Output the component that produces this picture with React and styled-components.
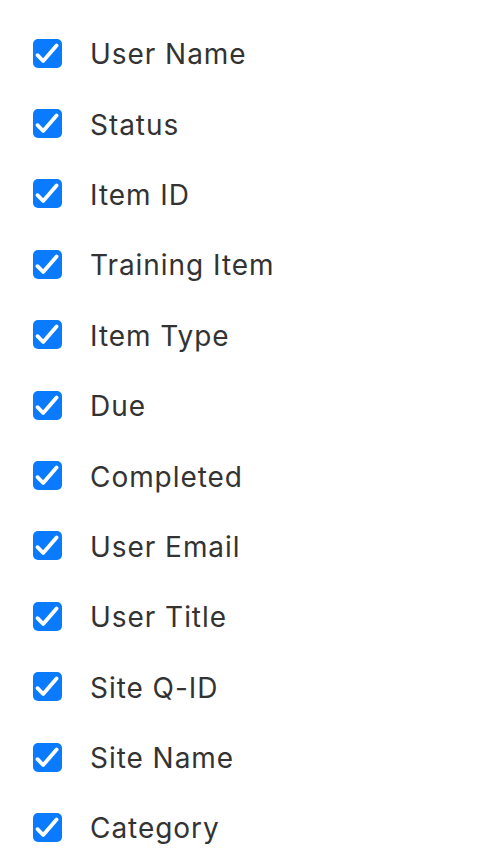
import React from "react";
import styled, { createGlobalStyle } from "styled-components";

const Global = createGlobalStyle`
  html, body { margin: 0; padding: 0; background: #fff; }
  body { font-family: Inter, "Noto Sans", "Liberation Sans", sans-serif; }
`;

const List = styled.ul`
  list-style: none;
  margin: 0;
  padding: 18px 0 0 33px;
  display: flex;
  flex-direction: column;
`;

const Row = styled.li`
  height: 70.4px;
  display: flex;
  align-items: center;
  gap: 28px;
`;

const Box = styled.span`
  width: 29px;
  height: 29px;
  border-radius: 5px;
  background: ${(p) => (p.$checked ? "#0a7aff" : "#fff")};
  border: ${(p) => (p.$checked ? "none" : "2px solid #999")};
  box-sizing: border-box;
  display: flex;
  flex-shrink: 0;
`;

const Label = styled.span`
  font-size: 28px;
  color: #333;
  line-height: 1;
  letter-spacing: 0.95px;
  padding-top: 2px;
`;

const items = [
  "User Name",
  "Status",
  "Item ID",
  "Training Item",
  "Item Type",
  "Due",
  "Completed",
  "User Email",
  "User Title",
  "Site Q-ID",
  "Site Name",
  "Category",
];

const Check = () => (
  <svg width="29" height="29" viewBox="0 0 29 29">
    <path
      d="M4.5 16.2 L10.2 22 L23.6 6.4"
      fill="none"
      stroke="#fff"
      strokeWidth="3.8"
      strokeLinecap="round"
      strokeLinejoin="round"
    />
  </svg>
);

export default function App() {
  return (
    <>
      <Global />
      <List>
        {items.map((t) => (
          <Row key={t}>
            <Box $checked>
              <Check />
            </Box>
            <Label>{t}</Label>
          </Row>
        ))}
      </List>
    </>
  );
}
